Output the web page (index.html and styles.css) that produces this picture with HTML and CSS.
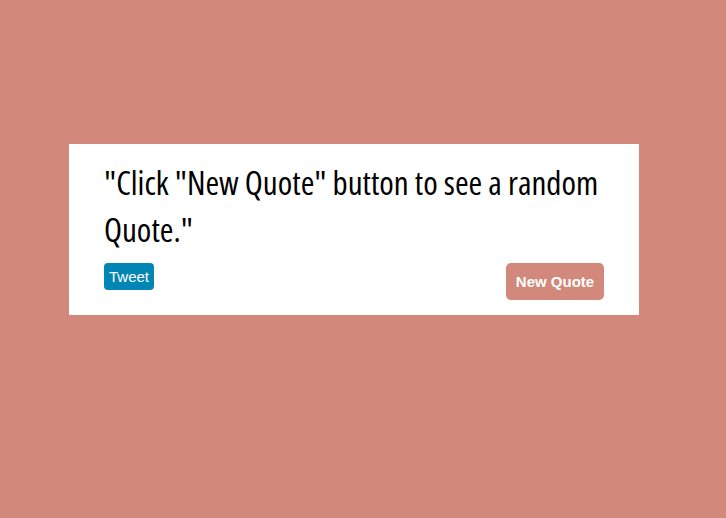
FILE: index.html
```html
<!DOCTYPE html>
<html>
<head>
<meta charset="utf-8">
<link rel="stylesheet" href="styles.css">
</head>
<body>
<div class="card">
  <p class="quote">"Click "New Quote" button to see a random Quote."</p>
  <div class="actions">
    <a class="tweet">Tweet</a>
    <button class="new-quote">New Quote</button>
  </div>
</div>
</body>
</html>
```

FILE: styles.css
```css
html, body {
  margin: 0;
  padding: 0;
}
body {
  background: #d2887a;
  width: 726px;
  height: 518px;
  padding-top: 144px;
  box-sizing: border-box;
}
.card {
  margin-left: 69px;
  width: 570px;
  box-sizing: border-box;
  background: #fff;
  padding: 15px 35px 15px 35px;
}
.quote {
  margin: 0;
  font-family: "Open Sans", sans-serif;
  font-stretch: 75%;
  font-weight: 500;
  font-size: 33px;
  line-height: 47px;
  color: #000;
}
.actions {
  display: flex;
  justify-content: space-between;
  align-items: flex-start;
  margin-top: 10px;
}
.tweet {
  display: block;
  background: #0085b5;
  color: #fff;
  font-family: "Liberation Sans", Arial, sans-serif;
  font-size: 15px;
  line-height: 27px;
  height: 27px;
  padding: 0 5px;
  border-radius: 4px;
}
.new-quote {
  background: #d2887a;
  color: #fff;
  border: 0;
  border-radius: 5px;
  font-family: "Liberation Sans", Arial, sans-serif;
  font-weight: bold;
  font-size: 15px;
  height: 37px;
  width: 98px;
  padding: 0;
}
```
